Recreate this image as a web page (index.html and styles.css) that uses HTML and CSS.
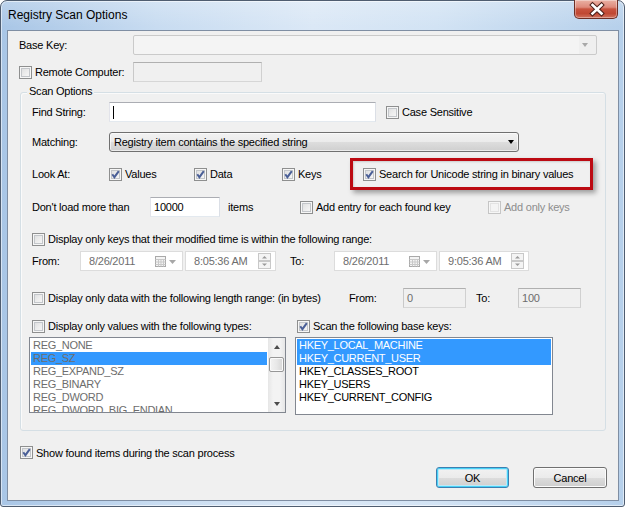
FILE: index.html
```html
<!DOCTYPE html>
<html>
<head>
<meta charset="utf-8">
<title>Registry Scan Options</title>
<link rel="stylesheet" href="styles.css">
</head>
<body>
<div class="window">
  <div class="titlebar">
    <span class="title">Registry Scan Options</span>
    <div class="close">
      <svg width="44" height="19" viewBox="0 0 44 19">
        <path d="M17.5 5 L26.5 13.5 M26.5 5 L17.5 13.5" fill="none" stroke="#4b1f19" stroke-width="4.6" stroke-linecap="square"/>
        <path d="M17.5 5 L26.5 13.5 M26.5 5 L17.5 13.5" fill="none" stroke="#ffffff" stroke-width="2.6" stroke-linecap="square"/>
      </svg>
    </div>
  </div>
  <div class="client">
    <div class="row r-base">
      <span class="lbl w-114">Base Key:</span>
      <div class="combo-dis"><span class="tri tri-gray"></span></div>
    </div>
    <div class="row r-remote">
      <label class="cb w-114"><span class="box"></span><span>Remote Computer:</span></label>
      <div class="tb-dis w-129"></div>
    </div>

    <div class="group">
      <span class="group-title">Scan Options</span>
      <div class="row g-find">
        <span class="lbl w-77">Find String:</span>
        <div class="tb w-267"><span class="caret"></span></div>
        <label class="cb ml-10"><span class="box"></span><span>Case Sensitive</span></label>
      </div>
      <div class="row g-match">
        <span class="lbl w-77">Matching:</span>
        <div class="select"><span class="sel-text">Registry item contains the specified string</span><span class="tri tri-black"></span></div>
      </div>
      <div class="row g-look">
        <span class="lbl w-77">Look At:</span>
        <label class="cb w-85"><span class="box"><svg class="chk" width="11" height="11" viewBox="0 0 11 11"><path d="M2.3 5.2 L4.4 8.2 L8.8 2.2" fill="none" stroke="#4a5f97" stroke-width="2"/></svg></span><span>Values</span></label>
        <label class="cb w-88"><span class="box"><svg class="chk" width="11" height="11" viewBox="0 0 11 11"><path d="M2.3 5.2 L4.4 8.2 L8.8 2.2" fill="none" stroke="#4a5f97" stroke-width="2"/></svg></span><span>Data</span></label>
        <label class="cb w-68"><span class="box"><svg class="chk" width="11" height="11" viewBox="0 0 11 11"><path d="M2.3 5.2 L4.4 8.2 L8.8 2.2" fill="none" stroke="#4a5f97" stroke-width="2"/></svg></span><span>Keys</span></label>
        <div class="highlight">
          <label class="cb"><span class="box"><svg class="chk" width="11" height="11" viewBox="0 0 11 11"><path d="M2.3 5.2 L4.4 8.2 L8.8 2.2" fill="none" stroke="#4a5f97" stroke-width="2"/></svg></span><span>Search for Unicode string in binary values</span></label>
        </div>
      </div>
      <div class="row g-load">
        <span class="lbl w-118">Don't load more than</span>
        <div class="tb w-70"><span class="tb-text">10000</span></div>
        <span class="lbl items">items</span>
        <label class="cb w-188"><span class="box"></span><span>Add entry for each found key</span></label>
        <label class="cb disabled"><span class="box"></span><span>Add only keys</span></label>
      </div>
      <div class="row g-keys">
        <label class="cb"><span class="box"></span><span>Display only keys that their modified time is within the following range:</span></label>
      </div>
      <div class="row g-from">
        <span class="lbl w-48">From:</span>
        <div class="date w-103"><span class="dt-text">8/26/2011</span><svg class="cal" width="22" height="12" viewBox="0 0 22 12"><rect x="0.5" y="0.5" width="10" height="10" fill="#f4f4f4" stroke="#a9a9a9"/><path d="M0.5 3.5 H10.5 M0.5 6 H10.5 M0.5 8.5 H10.5 M3.5 3.5 V10.5 M6 3.5 V10.5 M8.5 3.5 V10.5" stroke="#c9c9c9" fill="none"/><path d="M14 4 H21 L17.5 8 Z" fill="#a7a7a7"/></svg></div>
        <div class="date time w-91"><span class="dt-text">8:05:36 AM</span><svg class="spin" width="13" height="16" viewBox="0 0 13 16"><rect x="0.5" y="0.5" width="12" height="7" fill="#f4f4f4" stroke="#c8c8c8"/><rect x="0.5" y="8.5" width="12" height="7" fill="#f4f4f4" stroke="#c8c8c8"/><path d="M4 5.5 H9 L6.5 3 Z" fill="#9a9a9a"/><path d="M4 10.5 H9 L6.5 13 Z" fill="#9a9a9a"/></svg></div>
        <span class="lbl to1">To:</span>
        <div class="date w-103"><span class="dt-text">8/26/2011</span><svg class="cal" width="22" height="12" viewBox="0 0 22 12"><rect x="0.5" y="0.5" width="10" height="10" fill="#f4f4f4" stroke="#a9a9a9"/><path d="M0.5 3.5 H10.5 M0.5 6 H10.5 M0.5 8.5 H10.5 M3.5 3.5 V10.5 M6 3.5 V10.5 M8.5 3.5 V10.5" stroke="#c9c9c9" fill="none"/><path d="M14 4 H21 L17.5 8 Z" fill="#a7a7a7"/></svg></div>
        <div class="date time w-90"><span class="dt-text">9:05:36 AM</span><svg class="spin" width="13" height="16" viewBox="0 0 13 16"><rect x="0.5" y="0.5" width="12" height="7" fill="#f4f4f4" stroke="#c8c8c8"/><rect x="0.5" y="8.5" width="12" height="7" fill="#f4f4f4" stroke="#c8c8c8"/><path d="M4 5.5 H9 L6.5 3 Z" fill="#9a9a9a"/><path d="M4 10.5 H9 L6.5 13 Z" fill="#9a9a9a"/></svg></div>
      </div>
      <div class="row g-len">
        <label class="cb w-317"><span class="box"></span><span>Display only data with the following length range: (in bytes)</span></label>
        <span class="lbl w-54">From:</span>
        <div class="tb-dis w-63"><span class="tb-text">0</span></div>
        <span class="lbl to2">To:</span>
        <div class="tb-dis w-63"><span class="tb-text">100</span></div>
      </div>
      <div class="row g-types">
        <label class="cb w-265"><span class="box"></span><span>Display only values with the following types:</span></label>
        <label class="cb"><span class="box"><svg class="chk" width="11" height="11" viewBox="0 0 11 11"><path d="M2.3 5.2 L4.4 8.2 L8.8 2.2" fill="none" stroke="#4a5f97" stroke-width="2"/></svg></span><span>Scan the following base keys:</span></label>
      </div>
      <div class="row g-lists">
        <div class="list list1">
          <div class="items dim">
            <div class="item">REG_NONE</div>
            <div class="item sel">REG_SZ</div>
            <div class="item">REG_EXPAND_SZ</div>
            <div class="item">REG_BINARY</div>
            <div class="item">REG_DWORD</div>
            <div class="item">REG_DWORD_BIG_ENDIAN</div>
          </div>
          <div class="vscroll">
            <div class="sbtn"><span class="arr-up"></span></div>
            <div class="track"><div class="thumb"></div></div>
            <div class="sbtn"><span class="arr-down"></span></div>
          </div>
        </div>
        <div class="list list2">
          <div class="items">
            <div class="item sel">HKEY_LOCAL_MACHINE</div>
            <div class="item sel">HKEY_CURRENT_USER</div>
            <div class="item">HKEY_CLASSES_ROOT</div>
            <div class="item">HKEY_USERS</div>
            <div class="item">HKEY_CURRENT_CONFIG</div>
          </div>
        </div>
      </div>
    </div>

    <div class="row r-show">
      <label class="cb"><span class="box"><svg class="chk" width="11" height="11" viewBox="0 0 11 11"><path d="M2.3 5.2 L4.4 8.2 L8.8 2.2" fill="none" stroke="#4a5f97" stroke-width="2"/></svg></span><span>Show found items during the scan process</span></label>
    </div>
    <div class="row r-btns">
      <div class="btn btn-default">OK</div>
      <div class="btn btn-cancel">Cancel</div>
    </div>
  </div>
</div>
</body>
</html>
```
FILE: styles.css
```css
* { box-sizing: border-box; }
html, body { margin: 0; padding: 0; background: #ffffff; }
body {
  width: 626px;
  height: 509px;
  overflow: hidden;
  font-family: "Liberation Sans", Arial, sans-serif;
  font-size: 11px;
  color: #000;
}
.window {
  width: 625px;
  height: 507px;
  border: 1px solid #4f5d70;
  border-radius: 7px 7px 3px 3px;
  background:
    linear-gradient(to bottom, rgba(255,255,255,0.22) 0px, rgba(255,255,255,0) 26px),
    linear-gradient(to right, #a9c6e6 0%, #c8dcf1 25%, #dbe8f6 50%, #d2e3f4 70%, #b6d0eb 100%);
  box-shadow: inset 0 0 0 1px rgba(255,255,255,0.55);
  display: flex;
  flex-direction: column;
}
.titlebar {
  height: 29px;
  display: flex;
  justify-content: space-between;
  align-items: flex-start;
  padding-left: 7px;
}
.title {
  font-size: 12px;
  line-height: 29px;
  color: #000;
}
.close {
  width: 44px;
  height: 19px;
  margin-right: 6px;
  margin-top: -1px;
  border: 1px solid #6d2e25;
  border-top: none;
  border-radius: 0 0 5px 5px;
  background: linear-gradient(to bottom, #eab1a4 0%, #de8a7b 40%, #c8533f 50%, #c04833 75%, #d0735f 100%);
  box-shadow: inset 0 0 0 1px rgba(255,255,255,0.35);
}
.close svg { display: block; }
.client {
  width: 612px;
  height: 471px;
  margin-left: 6px;
  border: 1px solid #7f8ea3;
  background: #f0f0f0;
  letter-spacing: -0.22px;
}

.row { display: flex; align-items: center; }
.lbl { white-space: nowrap; flex: none; }
.w-48 { width: 48px; }
.w-54 { width: 54px; }
.w-63 { width: 63px; }
.w-68 { width: 68px; }
.w-70 { width: 70px; }
.w-77 { width: 77px; }
.w-85 { width: 85px; }
.w-88 { width: 88px; }
.w-90 { width: 90px; }
.w-91 { width: 91px; }
.w-103 { width: 103px; }
.w-114 { width: 114px; }
.w-118 { width: 118px; }
.w-129 { width: 129px; }
.w-188 { width: 188px; }
.w-265 { width: 265px; }
.w-267 { width: 267px; }
.w-317 { width: 317px; }
.ml-10 { margin-left: 10px; }

/* checkbox */
.cb { display: flex; align-items: center; white-space: nowrap; flex: none; }
.box {
  width: 13px;
  height: 13px;
  flex: none;
  margin-right: 3px;
  border: 1px solid #8e8f8f;
  background: linear-gradient(135deg, #d9dadb 0%, #ececec 50%, #fbfbfb 100%);
  box-shadow: inset 0 0 0 1px #f6f6f6, inset 0 0 0 2px #c3c6ca;
  position: relative;
}
.chk { display: block; }
.cb.disabled { color: #8d8d8d; }
.cb.disabled .box {
  border-color: #c5c5c5;
  background: #f4f4f4;
  box-shadow: inset 0 0 0 1px #f6f6f6, inset 0 0 0 2px #e3e3e3;
}

/* top rows */
.r-base { margin-top: 4px; height: 20px; padding-left: 11px; }
.combo-dis {
  width: 464px;
  height: 20px;
  border: 1px solid #cacaca;
  border-radius: 2px;
  background: linear-gradient(to right, #f4f4f4 0, #f4f4f4 445px, #efefef 445px);
  display: flex;
  align-items: center;
  justify-content: flex-end;
  padding-right: 8px;
}
.tri { width: 0; height: 0; border-left: 3.5px solid transparent; border-right: 3.5px solid transparent; }
.tri-gray { border-top: 4px solid #a8a8a8; }
.tri-black { border-top: 4px solid #000; }

.r-remote { margin-top: 7px; height: 20px; padding-left: 11px; }
.tb-dis {
  height: 20px;
  border: 1px solid #b2b2b2;
  border-color: #b0b0b0 #d0d0d0 #d6d6d6 #c9c9c9;
  background: #f0f0f0;
  display: flex;
  align-items: center;
  padding-left: 3px;
  color: #6d6d6d;
}
.tb {
  height: 20px;
  border: 1px solid;
  border-color: #abadb3 #dbdfe6 #e3e9ef #e2e3ea;
  background: #fff;
  display: flex;
  align-items: center;
  padding-left: 3px;
  flex: none;
}
.caret { width: 1px; height: 13px; background: #000; }
.tb-text { white-space: nowrap; }

/* group */
.group {
  position: relative;
  margin: 10px 0 0 12px;
  width: 586px;
  height: 339px;
  border: 1px solid #d5dfe5;
  border-radius: 3px;
  box-shadow: inset 1px 1px 0 #fafafa;
  padding-left: 11px;
}
.group-title {
  position: absolute;
  top: -8px;
  left: 6px;
  padding: 0 2px;
  line-height: 13px;
  background: #f0f0f0;
}
.g-find { margin-top: 9px; height: 20px; }
.g-match { margin-top: 10px; height: 20px; }
.select {
  width: 410px;
  height: 20px;
  border: 1px solid #707070;
  border-radius: 3px;
  background: linear-gradient(to bottom, #f2f2f2 0%, #ebebeb 50%, #dddddd 51%, #cfcfcf 100%);
  box-shadow: inset 0 0 0 1px rgba(255,255,255,0.6);
  display: flex;
  align-items: center;
  justify-content: space-between;
  padding: 0 4px 0 4px;
}
.g-look { margin-top: 6px; height: 32px; }
.highlight {
  width: 243px;
  height: 32px;
  border: 3px solid #bc0a12;
  box-shadow: 3px 3px 5px rgba(0,0,0,0.35), inset 1px 1px 2px rgba(0,0,0,0.15);
  display: flex;
  align-items: center;
  padding-left: 10px;
}
.g-load { margin-top: 7px; height: 20px; }
.lbl.items { margin-left: 8px; width: 72px; }
.g-keys { margin-top: 15px; height: 14px; }
.g-from { margin-top: 5px; height: 20px; }
.date {
  height: 20px;
  border: 1px solid #dcdcdc;
  background: #fff;
  display: flex;
  align-items: center;
  justify-content: space-between;
  padding: 0 5px 0 8px;
  color: #6d6d6d;
  flex: none;
}
.date .cal { display: block; margin-top: 1px; }
.date.time { margin-left: 2px; padding-right: 4px; }
.date .spin { display: block; }
.to1 { margin-left: 14px; width: 44px; }
.g-len { margin-top: 17px; height: 20px; }
.to2 { margin-left: 10px; width: 42px; }
.g-types { margin-top: 11px; height: 14px; }
.g-lists { margin-top: 4px; margin-left: -3px; align-items: flex-start; }

.list {
  border: 1px solid #828790;
  background: #fff;
  display: flex;
  font-size: 11px;
  letter-spacing: -0.3px;
}
.list1 { width: 257px; height: 76px; }
.list2 { width: 258px; height: 78px; margin-left: 9px; }
.list .items { flex: 1; padding: 1px; overflow: hidden; }
.item { height: 13px; line-height: 13px; padding-left: 2px; white-space: nowrap; }
.item.sel { background: #3399ff; color: #fff; }
.items.dim .item { color: #6d6d6d; }
.items.dim .item.sel { color: #6d6d6d; }

.vscroll {
  width: 17px;
  display: flex;
  flex-direction: column;
  background: linear-gradient(to right, #e6e6e6 0%, #f3f3f3 30%, #f3f3f3 70%, #e6e6e6 100%);
}
.sbtn {
  height: 17px;
  display: flex;
  align-items: center;
  justify-content: center;
}
.track { flex: 1; padding-top: 2px; padding-left: 1px; padding-right: 1px; }
.thumb {
  height: 15px;
  border: 1px solid #979797;
  border-radius: 2px;
  background: linear-gradient(to right, #f3f3f3 0%, #e8e8e8 50%, #d6d6d6 100%);
  box-shadow: inset 0 0 0 1px #fafafa;
}
.arr-up { width: 0; height: 0; border-left: 3.5px solid transparent; border-right: 3.5px solid transparent; border-bottom: 4px solid #4d4d4d; }
.arr-down { width: 0; height: 0; border-left: 3.5px solid transparent; border-right: 3.5px solid transparent; border-top: 4px solid #4d4d4d; }

.r-show { margin-top: 15px; height: 13px; padding-left: 12px; }
.r-btns { margin-top: 8px; height: 21px; justify-content: flex-end; padding-right: 11px; gap: 24px; }
.btn {
  height: 21px;
  border: 1px solid #707070;
  border-radius: 3px;
  background: linear-gradient(to bottom, #f2f2f2 0%, #ebebeb 50%, #dddddd 51%, #cfcfcf 100%);
  box-shadow: inset 0 0 0 1px #fcfcfc;
  display: flex;
  align-items: center;
  justify-content: center;
}
.btn-default {
  width: 73px;
  border-color: #3c7fb1;
  box-shadow: inset 0 0 0 1px #48d2f7, inset 0 0 0 2px #bde9f8;
}
.btn-cancel { width: 74px; }
```
